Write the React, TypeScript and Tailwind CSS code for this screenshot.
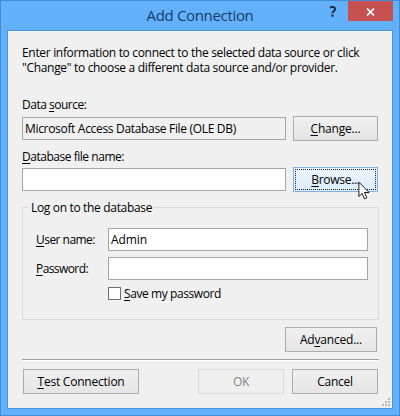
import type { ReactNode } from "react";

function Key({ children }: { children: ReactNode }) {
  return <span className="underline decoration-1 underline-offset-2">{children}</span>;
}

const buttonBase =
  "flex h-[25px] shrink-0 items-center justify-center border text-[12px] leading-[15px] whitespace-nowrap";
const buttonNormal = "border-[#acacac] bg-linear-to-b from-[#f0f0f0] to-[#e5e5e5] text-black";

function Button({ className, children }: { className: string; children: ReactNode }) {
  return (
    <button type="button" className={`${buttonBase} ${buttonNormal} ${className}`}>
      {children}
    </button>
  );
}

function TitleBar() {
  return (
    <div className="relative flex h-[29px] shrink-0 justify-center">
      <div className="mt-[3px] text-[15px] leading-[22px] tracking-[-0.33px] text-[#143c66]">Add Connection</div>
      <div className="absolute top-0 right-[6px] flex items-start">
        <svg width="8" height="11" viewBox="0 0 8 11" className="mt-[5px] mr-[11px]" fill="none" aria-label="Help">
          <path d="M1 1.6C3 .5 6.1.6 6.1 3c0 2-2.6 1.9-2.6 4.2" stroke="#14283c" strokeWidth="1.9" />
          <rect x="2.4" y="8.5" width="2.2" height="2.2" fill="#14283c" />
        </svg>
        <div className="flex h-[20px] w-[45px] items-center justify-center bg-[#c75050]">
          <svg width="9" height="8" viewBox="0 0 9 8" className="mt-px" fill="none" aria-label="Close">
            <path d="M1 .5 8 7.5M8 .5 1 7.5" stroke="#fff" strokeWidth="1.7" />
          </svg>
        </div>
      </div>
    </div>
  );
}

function Pointer() {
  return (
    <svg
      width="13"
      height="20"
      viewBox="0 0 13 20"
      className="absolute top-[14px] left-[65px]"
      fill="#fff"
      stroke="#1a1a1a"
      strokeWidth="1"
    >
      <path d="M.9 1.2v14.3l3.2-3.1 2.3 5.4 2.4-1-2.3-5.3h4.6z" />
    </svg>
  );
}

const gripDots = [
  [6, 0],
  [3, 3],
  [6, 3],
  [0, 6],
  [3, 6],
  [6, 6],
];

export default function App() {
  return (
    <div className="flex h-[416px] w-[400px] flex-col overflow-hidden border border-[#3f8cd4] bg-[#64b1fb] font-['Open_Sans','Segoe_UI',sans-serif] text-[12px] leading-[15px] text-black">
      <TitleBar />
      <div className="mx-[6px] flex h-[379px] flex-col border border-[#4a96de] bg-[#f0f0f0] pl-[14px]">
        <p className="mt-[14px] tracking-[-0.32px] whitespace-nowrap">
          Enter information to connect to the selected data source or click
          <br />
          "Change" to choose a different data source and/or provider.
        </p>

        <div className="mt-[22px] tracking-[-0.5px]">
          Data <Key>s</Key>ource:
        </div>
        <div className="mt-[4px] flex items-center gap-[7px]">
          <div className="flex h-[23px] w-[264px] items-center border border-[#a5a5a5] pb-px pl-[2px] tracking-[-0.32px]">
            Microsoft Access Database File (OLE DB)
          </div>
          <Button className="w-[85px] tracking-[-0.19px]">
            <Key>C</Key>hange...
          </Button>
        </div>

        <div className="mt-[8px] tracking-[-0.47px]">
          <Key>D</Key>atabase file name:
        </div>
        <div className="mt-[3px] flex items-center gap-[7px]">
          <div className="h-[23px] w-[264px] border border-[#a5a5a5] bg-white" />
          <div className="relative">
            <button
              type="button"
              className="flex h-[25px] w-[85px] border border-[#7eb4ea] bg-linear-to-b from-[#ecf4fc] to-[#dcecfc] p-px tracking-[-0.3px]"
            >
              <span className="flex h-full w-full items-center justify-center border border-dotted border-[#222] leading-[15px]">
                <Key>B</Key>rowse...
              </span>
            </button>
            <Pointer />
          </div>
        </div>

        <div className="relative mt-[15px] h-[113px] w-[357px] border border-[#dcdcdc] pl-[13px]">
          <div className="absolute -top-[8px] left-[6px] bg-[#f0f0f0] px-[2px] tracking-[-0.33px]">
            Log on to the database
          </div>
          <div className="mt-[20px] flex h-[23px] items-center">
            <div className="w-[72px] tracking-[-0.53px]">
              <Key>U</Key>ser name:
            </div>
            <div className="flex h-[23px] w-[260px] items-center border border-[#a5a5a5] bg-white pb-px pl-[2px] tracking-[-0.08px]">
              Admin
            </div>
          </div>
          <div className="mt-[6px] flex h-[23px] items-center">
            <div className="w-[72px] tracking-[-0.58px]">
              <Key>P</Key>assword:
            </div>
            <div className="h-[23px] w-[260px] border border-[#a5a5a5] bg-white" />
          </div>
          <div className="mt-[6px] ml-[72px] flex items-center gap-[3px] tracking-[-0.41px]">
            <div className="size-[13px] border border-[#707070] bg-white" />
            <div>
              <Key>S</Key>ave my password
            </div>
          </div>
        </div>

        <Button className="mt-[7px] ml-[263px] w-[92px] tracking-[-0.2px]">
          <span>
            Ad<Key>v</Key>anced...
          </span>
        </Button>

        <div className="mt-[7px] h-[2px] w-[357px] border-t border-b border-t-[#a0a0a0] border-b-white" />

        <div className="mt-[8px] flex pl-px">
          <Button className="w-[116px] tracking-[-0.22px]">
            <Key>T</Key>est Connection
          </Button>
          <button
            type="button"
            disabled
            className="ml-[59px] flex h-[25px] w-[86px] items-center justify-center border border-[#d9d9d9] bg-[#efefef] tracking-[-0.3px] text-[#838383]"
          >
            OK
          </button>
          <Button className="ml-[8px] w-[86px] tracking-[-0.27px]">Cancel</Button>
        </div>

        <svg width="8" height="8" viewBox="0 0 8 8" className="mt-[4px] ml-[360px] shrink-0">
          {gripDots.map(([x, y]) => (
            <rect key={`${x}-${y}`} x={x} y={y} width="2" height="2" fill="#bcb8b2" />
          ))}
        </svg>
      </div>
    </div>
  );
}
